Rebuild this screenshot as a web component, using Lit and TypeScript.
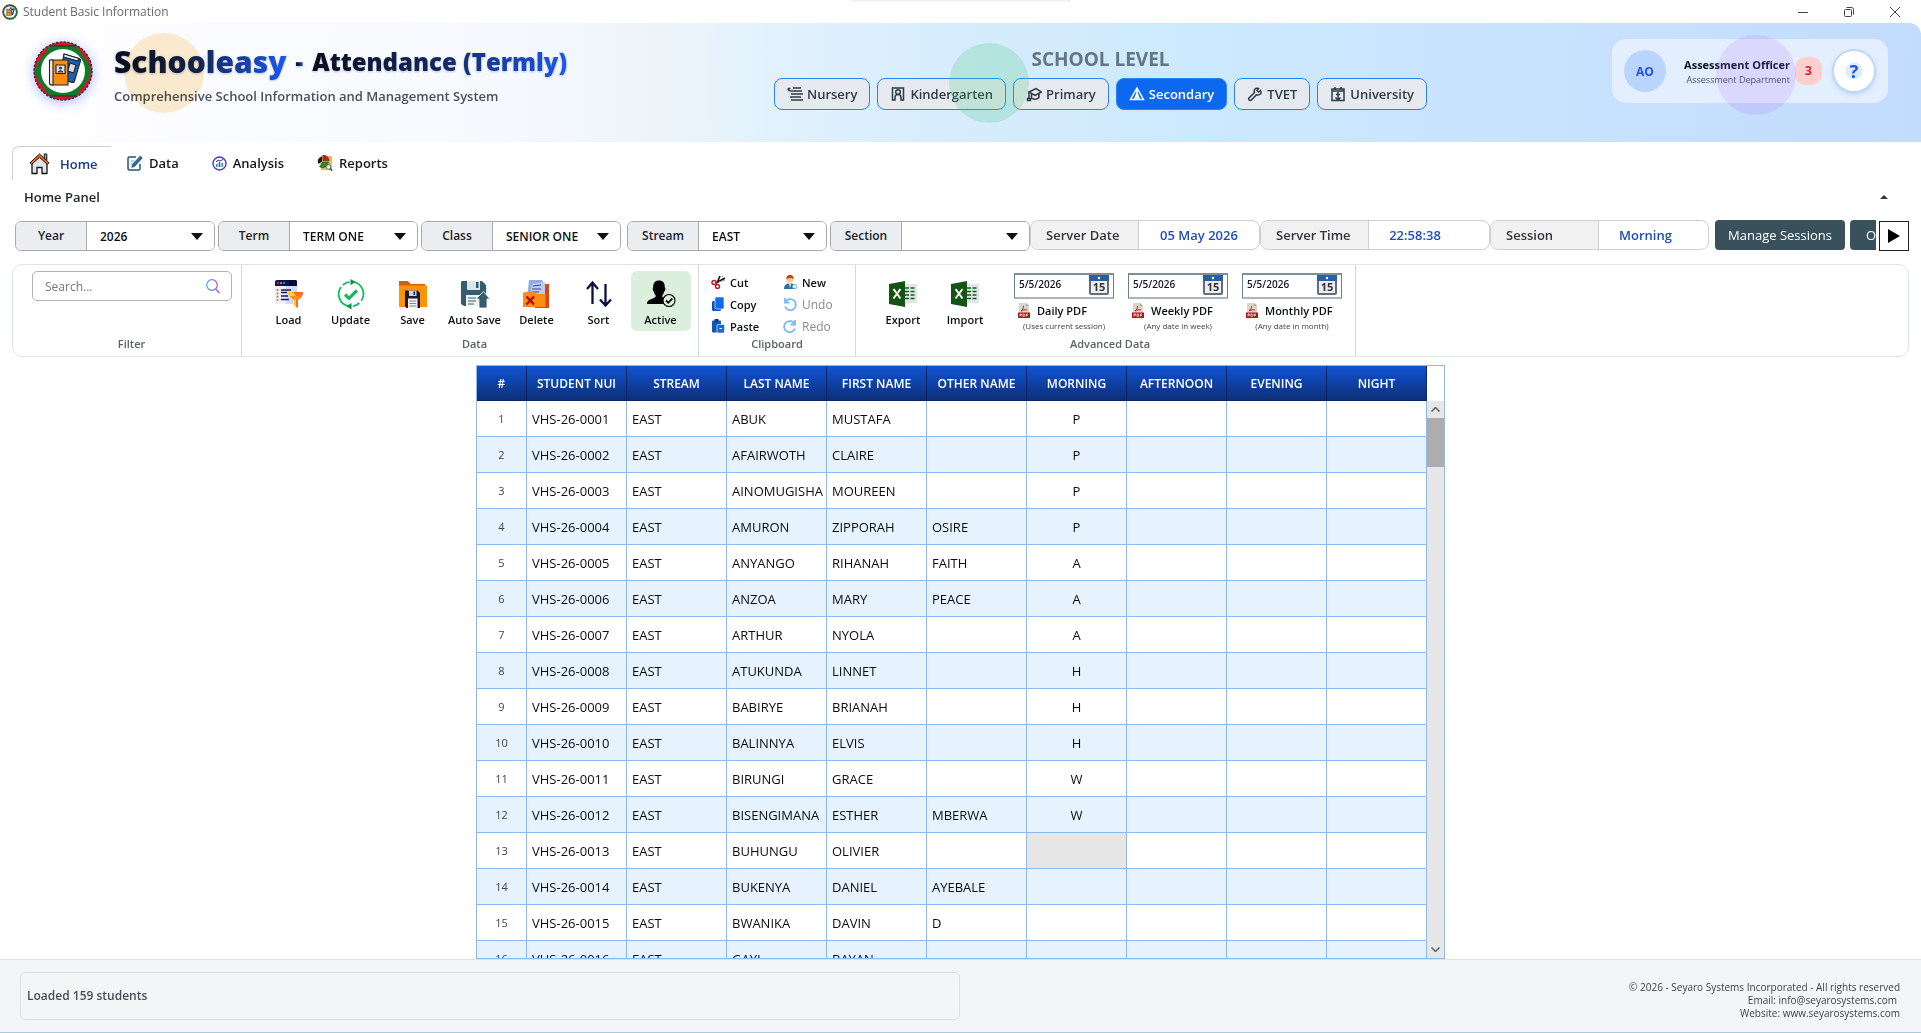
import { LitElement, html, css, svg, nothing } from "lit";
import { customElement } from "lit/decorators.js";
import { classMap } from "lit/directives/class-map.js";

const emblem = (size: number) => html`
  <svg class="emblem" width=${size} height=${size} viewBox="0 0 60 60" aria-hidden="true">
    <circle cx="30" cy="30" r="29" fill="#e3141c" stroke="#2b2a5e" stroke-width="1.6" stroke-dasharray="2.4 1.4" />
    <path d="M17 5h26L55 21l3 9-3 9-12 16H17L5 39l-3-9 3-9z" fill="#0a7d2c" />
    <path d="M17 5h26M17 55h26" stroke="#0b3d1c" stroke-width="1" />
    <circle cx="30" cy="30" r="22" fill="#fff" />
    <g stroke="#1b2330" stroke-width="1.1" stroke-linejoin="round">
      <path d="M31 13l15 4.5c1.400.4 1.800 1.300 1.400 2.600L41.500 40c-.4 1.400-1.200 1.800-2.600 1.400L26 37z" fill="#1f5fae" />
      <path d="M31 13l15 4.500-1 2.600L30.500 16z" fill="#e8eef5" />
      <path d="M37 22l6 2-2.400 8-6-2z" fill="#cfdcec" />
      <path d="M18 19h17v25H20c-1.800 0-3-.8-3-2.500V20z" fill="#f98c13" />
      <path d="M16.500 19h3.500v25h-1c-1.700 0-2.500-.8-2.500-2.300z" fill="#f4ead9" />
      <path d="M23 24h9v8.500h-9z" fill="#dfe3e8" />
    </g>
    <circle cx="27.500" cy="27" r="1.600" fill="#39424f" />
    <path d="M24.500 31.500c.4-3 5.600-3 6 0z" fill="#39424f" />
  </svg>
`;

const tabIcons: Record<string, unknown> = {
  Home: html`<svg width="21" height="22" viewBox="0 0 21 22" aria-hidden="true">
    <path d="M3 10v10.500h5v-6h5v6h5V10l-7.500-7z" fill="#dfe6ea" stroke="#111" stroke-width="1.300" stroke-linejoin="round" />
    <path d="M15.200 1h2.600v6.500l-2.600-2.400z" fill="#9aa4ab" stroke="#111" />
    <path d="M10.500 1L1 9.800l1.600 1.700 7.900-7.200 7.900 7.200L20 9.800z" fill="#ff6a13" stroke="#111" stroke-linejoin="round" />
  </svg>`,
  Data: html`<svg width="16" height="16" viewBox="0 0 16 16" fill="none" aria-hidden="true">
    <path d="M9 2H2.500C1.700 2 1 2.700 1 3.500v10c0 .8.7 1.500 1.500 1.500h9c.8 0 1.500-.7 1.500-1.500V9" stroke="#21557f" stroke-width="1.500" />
    <path d="M3.500 6h4M3.500 9h2" stroke="#8fa9bd" />
    <path d="M13.300 1l2 2-7.500 8.200-3 1.200.8-3.200z" fill="#2f6c9c" stroke="#163c5c" stroke-width=".6" />
  </svg>`,
  Analysis: html`<svg width="15" height="15" viewBox="0 0 15 15" aria-hidden="true">
    <circle cx="7.500" cy="7.500" r="6.500" fill="#fff" stroke="#4638e0" stroke-width="1.400" />
    <path d="M4 8h1.600v3H4z" fill="#12a6a0" /><path d="M6.700 6h1.600v5H6.700z" fill="#3848e8" /><path d="M9.400 7h1.600v4H9.400z" fill="#28b36b" />
    <path d="M4 6l2-2 2 1 3-1.500" fill="none" stroke="#23246b" stroke-width=".9" />
  </svg>`,
  Reports: html`<svg width="16" height="16" viewBox="0 0 16 16" aria-hidden="true">
    <path d="M4 1h11v14H4z" fill="#f5b83c" />
    <path d="M6 5.500V0a6 6 0 016 5.500z" fill="#e8121c" stroke="#222" stroke-width=".6" />
    <path d="M5 6.500V1.500A5 5 0 001.500 9z" fill="#1f1a17" />
    <path d="M5.500 7h6a6 6 0 01-9 4.800z" fill="#27901f" stroke="#222" stroke-width=".5" />
    <circle cx="11.500" cy="12" r="2.300" fill="#e6f6fa" stroke="#1c7f93" stroke-width=".9" />
    <path d="M13.200 13.600l2 2" stroke="#222" stroke-width="1.200" />
  </svg>`,
};

const levelIcons: Record<string, unknown> = {
  Nursery: svg`<path d="M1 2.500h2.500M1 2.500c0 2 2 2.500 4 2.500h10M6 2h8M4 8h12M3 11h11M4 14h12" />`,
  Kindergarten: svg`<path d="M2.500 2h11v12h-2.500v-2.500a3 3 0 00-6 0V14H2.500z" /><circle cx="8" cy="6" r="2.300" />`,
  Primary: svg`<path d="M3 6l7-3.500L15.500 6 9 9.500zM5.500 8v4c2 2 5.500 1.500 7.500-.5V7.500M3 6.500v6M1.500 12.500h3v2h-3z" />`,
  Secondary: svg`<path d="M8 2L14.500 13.500h-13zM8 2v11.500M5.500 13.500L8 7l2.500 6.500" />`,
  TVET: svg`<path d="M13.500 4.500L11.500 6 10 4.500l1.500-2c-3-1-5 1-4 4L2 12c-1 1.500.8 3.300 2.200 2.200L9.500 8.700c3.500 1 5.500-1.200 4-4.200z" />`,
  University: svg`<path d="M2 3h12v11.500H2zM2 5h12M5 1v3M11 1v3M8 6v8M6 8.500h4M5.500 11.500L8 14l2.500-2.500" />`,
};

const bigIcons: Record<string, unknown> = {
  Load: svg`
    <path d="M0 5h22v14l-3 5H1.500A1.500 1.500 0 010 22.500z" fill="#d5d6fb" /><path d="M0 5h11v19H1.500A1.500 1.500 0 010 22.500z" fill="#f0f1f4" />
    <path d="M0 6V2a2 2 0 012-2h18a2 2 0 012 2v4z" fill="#061650" /><path d="M14 0h6a2 2 0 012 2v4h-8z" fill="#030b31" />
    <circle cx="3" cy="3" r=".9" fill="#f43" /><circle cx="6" cy="3" r=".9" fill="#fa3" /><circle cx="9" cy="3" r=".9" fill="#5ae" />
    <path d="M2.500 9v12" stroke="#ff5a36" stroke-width="1.600" stroke-dasharray="2 1.400" />
    <path d="M6 10h10M6 12.500h6M6 16h7M6 19.500h8" stroke="#0b1d6b" stroke-width="1.400" />
    <path d="M13 12h15c0 4-2 6-5 7.500V28l-4-2.500v-6C15 18 13 16 13 12z" fill="#ffd21e" /><path d="M18 12h10c0 4-2 6-5 7.500V28l-2-1.200V16z" fill="#ff6a2b" /><path d="M15 16h11l-3 3.500h-5z" fill="#fb8d1b" />`,
  Update: svg`
    <g fill="none" stroke="#12bd60" stroke-width="1.800"><path d="M16.500 1.800a12.300 12.300 0 017.800 19M22.300 23a12.300 12.300 0 01-6.300 3.200M11.500 26.200A12.300 12.300 0 014 7M5.800 5A12.300 12.300 0 0112.500 1.800" /></g>
    <path d="M13.500-1l5 3-5 3.200zM14.500 23l-5 3.200 5 3.200z" fill="#0b8f49" />
    <path d="M8 14.500l4 3.800 8-7.800" fill="none" stroke="#14b95c" stroke-width="3.200" />`,
  Save: svg`
    <path d="M0 1h9l2.500 3H26v8H0z" fill="#d65f04" /><path d="M0 5.500h28V27H0z" fill="#ff9408" />
    <path d="M6 10.500h12.500L21 13v15H7.500L6 26.500z" fill="#191a38" /><path d="M10 10.500h7.500v5.500H10z" fill="#c9d2e6" /><path d="M14.500 11.500h1.600v3.500h-1.600z" fill="#191a38" />
    <path d="M9 18.500h9.500V28H9z" fill="#eef1f8" /><path d="M10.500 21h6.500M10.500 23.500h6.500M10.500 26h6.500" stroke="#7c87a4" />`,
  "Auto Save": svg`
    <path d="M1 1h20l4 4v21H3l-3-2V2z" fill="#365c70" /><path d="M6 1h13v9H6z" fill="#dbe6eb" /><path d="M15 2h2.500v6H15z" fill="#365c70" />
    <path d="M5 15h18v11H5z" fill="#eef3f5" /><path d="M7 18h8M7 21h8M7 24h6" stroke="#365c70" />
    <path d="M22.500 11.500L29 19h-3v9h-8v-9h-3z" fill="#365c70" stroke="#fff" stroke-width=".8" />`,
  Delete: svg`
    <path d="M12 4h14v24H12z" fill="#d9480f" /><path d="M6 0h13l2 3v15H4z" fill="#93aede" /><path d="M9 4l13-2v18H6z" fill="#bccdf0" /><path d="M10 6l8-1M9 9h9M8 12h8" stroke="#2d4a94" stroke-width="1.100" />
    <path d="M0 12.500L10 11l3 3h9.500V27H0z" fill="#fb8c1a" /><path d="M3.500 16.500l7.500 8M11 16.500l-7.500 8" stroke="#b80d0d" stroke-width="2.400" />`,
  Sort: svg`<path d="M7.500 24V3M2 9l5.500-6.500L13 9M20.500 4v21M15 19.500l5.500 6 5.500-6" fill="none" stroke="#0a1045" stroke-width="2.300" />`,
  Active: svg`
    <path d="M12 .5c4 0 6 2.500 5.800 7C19 8 18 11 17 12c-.5 2-1.500 3.500-2 4 1 2.500 4 2.800 5 4-1.500 1-1.500 2-1.600 4H0c0-6 7-4 9-8-.8-.8-1.500-2-2-4-1.200-1-1.700-4-.8-4.500C6 3 8 .5 12 .5z" fill="#000" />
    <circle cx="22" cy="20.500" r="6" fill="#dcefdc" stroke="#000" stroke-width="1.100" /><path d="M19 20.500l2.300 2.300 4-4.300" fill="none" stroke="#000" stroke-width="1.800" />`,
  Export: svg`
    <path d="M13 4h15v19H13z" fill="#e1e6e4" /><path d="M16 8h4M21.500 8h4M16 11.500h4M21.500 11.500h4M16 15h4M21.500 15h4M16 18.500h4M21.500 18.500h4" stroke="#14591c" stroke-width="1.500" />
    <path d="M0 4L16 1v26L0 24z" fill="#135314" /><path d="M4.500 9l7 9.500M11.500 9l-7 9.500" stroke="#fff" stroke-width="2" />`,
};
bigIcons.Import = bigIcons.Export;

const smallIcons: Record<string, unknown> = {
  Cut: svg`<g fill="none"><path d="M9 1L6 8M14 3L5 8" stroke="#111" stroke-width="1.600" /><path d="M11 1l1 1M14 5l-6 2" stroke="#999" /><circle cx="3" cy="7.500" r="2" stroke="#c9141b" stroke-width="1.500" /><circle cx="6.500" cy="11.500" r="2" stroke="#c9141b" stroke-width="1.500" /></g>`,
  Copy: svg`<rect x="1" y="4" width="9" height="10" rx="1.300" fill="#1550b8" /><rect x="4" y="0" width="9" height="12" rx="1.300" fill="#1268ee" stroke="#fff" stroke-width=".6" />`,
  Paste: svg`<rect x="1" y="1.500" width="9" height="12" rx="1" fill="#1257b5" /><rect x="3.500" y="0" width="4" height="3" fill="#0a3c8a" /><rect x="6" y="5.500" width="7.500" height="8.500" rx="1" fill="#1a68d8" stroke="#fff" stroke-width=".6" /><path d="M8.500 9.500h2.500" stroke="#fff" />`,
  New: svg`<circle cx="7" cy="4.500" r="3.300" fill="#f9c79a" /><path d="M3.500 4.500C3 1 5 0 7 0s4 1 3.500 4.500C9.500 2.500 5 2.500 3.500 4.500z" fill="#c8420d" /><path d="M1 14c0-4 2-5.500 6-5.500s6 1.500 6 5.500z" fill="#2a6f9a" /><path d="M6 8.500h2L7 13z" fill="#fff" /><circle cx="11.500" cy="11.500" r="2.200" fill="#dfeffa" stroke="#5f93b4" stroke-width=".7" />`,
  Undo: svg`<path d="M2 1v4.500h4.500M2.200 5.300A5.600 5.600 0 112 9.500" fill="none" stroke="#7cb8f4" stroke-width="1.800" />`,
  Redo: svg`<path d="M12 1v4.500H7.500M11.800 5.300A5.600 5.600 0 1012 9.500" fill="none" stroke="#7cb8f4" stroke-width="1.800" />`,
};

const pdfIcon = html`<svg width="12" height="15" viewBox="0 0 12 15" aria-hidden="true">
  <path d="M1 0h7l3 3v10H1z" fill="#d9d5c9" /><path d="M8 0l3 3H8z" fill="#a8a294" />
  <path d="M3 8c2-1.500 2.500-3 2.500-5M3 8c2-1.200 4-1.500 6-1" fill="none" stroke="#c2191f" />
  <path d="M0 9.500h12V15H0z" fill="#b3151b" /><path d="M2 13.500v-2.500h1.500v1.200H2M5 11v2.500h1c1.300 0 1.300-2.500 0-2.500zM8.500 13.500V11H10M8.500 12.200H10" fill="none" stroke="#fff" stroke-width=".7" />
</svg>`;

const LEVELS = ["Nursery", "Kindergarten", "Primary", "Secondary", "TVET", "University"];
const FILTERS = [
  { id: "year", label: "Year", value: "2026" },
  { id: "term", label: "Term", value: "TERM ONE" },
  { id: "class", label: "Class", value: "SENIOR ONE" },
  { id: "stream", label: "Stream", value: "EAST" },
  { id: "section", label: "Section", value: "" },
];
const SERVER = [
  { label: "Server Date", value: "05 May 2026" },
  { label: "Server Time", value: "22:58:38" },
  { label: "Session", value: "Morning" },
];
const REPORTS = [
  { name: "Daily PDF", note: "(Uses current session)" },
  { name: "Weekly PDF", note: "(Any date in week)" },
  { name: "Monthly PDF", note: "(Any date in month)" },
];
const COLUMNS = ["#", "STUDENT NUI", "STREAM", "LAST NAME", "FIRST NAME", "OTHER NAME", "MORNING", "AFTERNOON", "EVENING", "NIGHT"];
const STUDENTS: [string, string, string, string][] = [
  ["ABUK", "MUSTAFA", "", "P"],
  ["AFAIRWOTH", "CLAIRE", "", "P"],
  ["AINOMUGISHA", "MOUREEN", "", "P"],
  ["AMURON", "ZIPPORAH", "OSIRE", "P"],
  ["ANYANGO", "RIHANAH", "FAITH", "A"],
  ["ANZOA", "MARY", "PEACE", "A"],
  ["ARTHUR", "NYOLA", "", "A"],
  ["ATUKUNDA", "LINNET", "", "H"],
  ["BABIRYE", "BRIANAH", "", "H"],
  ["BALINNYA", "ELVIS", "", "H"],
  ["BIRUNGI", "GRACE", "", "W"],
  ["BISENGIMANA", "ESTHER", "MBERWA", "W"],
  ["BUHUNGU", "OLIVIER", "", ""],
  ["BUKENYA", "DANIEL", "AYEBALE", ""],
  ["BWANIKA", "DAVIN", "D", ""],
  ["GAYI", "BAYAN", "", ""],
];
const SELECTED_ROW = 12;

const base = css`
  * { box-sizing: border-box; }
  button, input, select { font-family: inherit; margin: 0; padding: 0; border: 0; background: none; color: inherit; }
  svg { display: block; flex: none; }
`;

@customElement("app-header")
class AppHeader extends LitElement {
  static styles = [base, css`
    :host { display: block; }
    .titlebar { position: relative; display: flex; align-items: center; height: 23px; padding: 0 20px 0 2px; gap: 5px; color: #6b6b6b; font-size: 12px; line-height: 16px; background: #fff; }
    .notch { position: absolute; top: 0; left: 851px; width: 220px; height: 3px; background: linear-gradient(#eee, #fff); }
    .window { display: flex; gap: 34px; margin-left: auto; }
    .window button { width: 12px; height: 12px; }
    .banner {
      position: relative; display: grid; grid-template-columns: 1fr auto 461px; height: 119px; padding: 0 33px;
      border-top-right-radius: 12px;
      background: linear-gradient(92deg, #fff 0%, #fafbff 12%, #f6f9fd 26%, #edf4f9 34%, #e2f2fc 40%, #d8edfc 48%, #cde9fd 62%, #cbe5fe 72%, #c3dbfd 100%);
    }
    .brand { display: flex; gap: 21px; padding-top: 18px; }
    .emblem { border-radius: 50%; filter: drop-shadow(0 2px 6px #a9b9f6); }
    .titlebar .emblem { filter: none; }
    .names { display: flex; flex-direction: column; padding-top: 1px; }
    h1 { display: flex; align-items: center; gap: 9px; margin: 0; font-size: 30px; line-height: 40px; font-weight: 800; filter: drop-shadow(0 1px 1px #b9c3da); white-space: nowrap; }
    .ink { background: linear-gradient(90deg, #0a0e1a, #14275e 50%, #1d57f2); background-clip: text; -webkit-background-clip: text; color: transparent; }
    .page { font-size: 24px; }
    .tagline { margin: 4px 0 0; font-size: 13px; line-height: 20px; font-weight: 600; color: #4a505b; white-space: nowrap; }
    .levels { display: flex; flex-direction: column; align-items: center; padding-top: 24px; }
    h2 { margin: 0; font-size: 19px; line-height: 24px; font-weight: 700; color: #637682; }
    .options { display: flex; gap: 7px; margin-top: 7px; }
    .option { display: flex; align-items: center; justify-content: center; gap: 4px; height: 32px; padding: 0 12px; border: 1px solid #2b83f2; border-radius: 8px; background: #e6e9ef; color: #2f3b46; font-size: 13px; font-weight: 600; }
    .option svg { fill: none; stroke: currentColor; stroke-width: 1.5; }
    .option.on { background: #0c68ee; color: #fff; }
    .side { display: flex; justify-content: flex-end; align-items: flex-start; padding-top: 16px; }
    .user { display: flex; align-items: center; width: 276px; height: 64px; padding: 0 14px 0 12px; border-radius: 14px; background: #e3effe; }
    .avatar { display: flex; align-items: center; justify-content: center; width: 42px; height: 42px; border-radius: 50%; background: #b9d5fe; color: #1d52f0; font-size: 12px; font-weight: 700; }
    .who { display: flex; flex-direction: column; flex: 1; align-items: flex-end; padding-right: 5px; white-space: nowrap; }
    .who strong { font-size: 11px; line-height: 16px; color: #0b1020; }
    .who span { font-size: 9px; line-height: 13px; color: #4b4f5e; }
    .count { width: 27px; height: 28px; border-radius: 10px; background: #fdd0cf; color: #e81c24; font-size: 12px; font-weight: 700; line-height: 28px; text-align: center; }
    .help { display: flex; align-items: center; justify-content: center; width: 40px; height: 40px; margin-left: 12px; border-radius: 50%; background: radial-gradient(#deeafe 0 8px, #fff 9px); box-shadow: 0 0 0 2px #bdd6fd, 0 2px 6px #a9c3f8; color: #1d52f0; font-size: 18px; font-weight: 700; }
    .blob { position: absolute; width: 80px; height: 80px; border-radius: 50%; pointer-events: none; }
    .amber { left: 124px; top: 10px; background: rgba(245, 158, 11, 0.2); mix-blend-mode: multiply; }
    .green { left: calc(50% - 12px); top: 20px; background: rgba(52, 199, 110, 0.2); }
    .violet { right: 125px; top: 12px; background: rgba(168, 85, 247, 0.15); }
  `];

  render() {
    return html`
      <div class="titlebar">
        ${emblem(16)}<span>Student Basic Information</span>
        <div class="notch"></div>
        <div class="window">
          <button aria-label="Minimize"><svg width="12" height="12" viewBox="0 0 12 12" stroke="#444"><path d="M1 6.500h10" /></svg></button>
          <button aria-label="Restore"><svg width="12" height="12" viewBox="0 0 12 12" fill="none" stroke="#444"><rect x="1.500" y="3.500" width="7" height="7" rx="1" /><path d="M3.500 1.500h5a2 2 0 012 2v5" /></svg></button>
          <button aria-label="Close"><svg width="12" height="12" viewBox="0 0 12 12" stroke="#444"><path d="M1 1l10 10M11 1L1 11" /></svg></button>
        </div>
      </div>
      <header class="banner">
        <div class="brand">
          ${emblem(60)}
          <div class="names">
            <h1><span class="ink">Schooleasy</span><span class="ink page">-</span><span class="ink page">Attendance (Termly)</span></h1>
            <p class="tagline">Comprehensive School Information and Management System</p>
          </div>
        </div>
        <nav class="levels">
          <h2>SCHOOL LEVEL</h2>
          <div class="options">
            ${LEVELS.map((name) => html`
              <button class=${classMap({ option: true, on: name === "Secondary" })}>
                <svg width="16" height="16" viewBox="0 0 16 16" aria-hidden="true">${levelIcons[name]}</svg>${name}
              </button>`)}
          </div>
        </nav>
        <div class="side">
          <div class="user">
            <div class="avatar">AO</div>
            <div class="who"><strong>Assessment Officer</strong><span>Assessment Department</span></div>
            <div class="count">3</div>
            <button class="help" aria-label="Help">?</button>
          </div>
        </div>
        <div class="blob amber"></div><div class="blob green"></div><div class="blob violet"></div>
      </header>`;
  }
}

@customElement("app-toolbar")
class AppToolbar extends LitElement {
  static styles = [base, css`
    :host { display: block; }
    .tabs { display: flex; padding: 4px 12px 0; }
    .tab { display: flex; align-items: center; gap: 6px; height: 34px; margin-right: 33px; font-size: 13px; font-weight: 600; color: #14181f; }
    .tab.on { gap: 10px; width: 99px; margin-right: 16px; padding-left: 16px; border-top: 1px solid #cfcfcf; border-left: 1px solid #cfcfcf; border-top-left-radius: 7px; color: #143c8c; }
    .panel { display: flex; align-items: center; justify-content: space-between; height: 34px; padding: 0 33px 0 24px; font-size: 13px; font-weight: 600; color: #23272e; }
    .filters { display: flex; align-items: center; height: 38px; padding: 0 12px 0 15px; margin-top: 3px; }
    .field { display: flex; flex: 0 0 200px; height: 30px; margin-right: 3px; border: 1px solid #a9a9a9; border-radius: 6px; overflow: hidden; position: relative; }
    .field.wide { margin-right: 6px; }
    .field.last { margin-right: 0; }
    .field label { width: 71px; background: #ebedf1; border-right: 1px solid #a9a9a9; font-size: 12px; font-weight: 600; line-height: 28px; text-align: center; color: #20242b; }
    .field select { flex: 1; min-width: 0; padding: 0 13px; appearance: none; background: #fff; font-size: 12px; font-weight: 600; color: #0c1017; }
    .field svg { position: absolute; right: 11px; top: 11px; pointer-events: none; }
    .server { display: flex; flex: 0 0 230px; height: 30px; margin: 0 0 2px; border: 1px solid #cfcfcf; border-radius: 8px; overflow: hidden; font-size: 13px; font-weight: 600; line-height: 28px; }
    .server.short { flex-basis: 219px; }
    .server dt { width: 108px; padding-left: 15px; background: #f1f1f1; border-right: 1px solid #cfcfcf; color: #33373d; white-space: nowrap; }
    .server dd { flex: 1; margin: 0; text-align: center; color: #1e4fb8; white-space: nowrap; }
    .server.clock dd { padding-right: 28px; }
    .server.short dd { padding-right: 16px; }
    .row-end { display: flex; flex: 1; min-width: 0; gap: 5px; margin: 0 3px 2px 6px; overflow: hidden; }
    .solid { flex: 0 0 130px; height: 30px; border-radius: 4px; background: #3a515c; color: #fff; font-size: 13px; white-space: nowrap; }
    .solid.cut { padding-left: 16px; text-align: left; }
    .scroll { display: flex; flex: none; align-items: center; justify-content: center; width: 30px; height: 30px; border: 1px solid #222; background: #fff; }
    .ribbon { display: flex; height: 93px; margin: 9px 12px 0; border: 1px solid #dfe3ea; border-radius: 10px; }
    .group { display: flex; flex-direction: column; justify-content: space-between; padding: 6px 0 5px 9px; border-right: 1px solid #d3d9e4; }
    .body { display: flex; justify-content: center; gap: 2px; }
    h3 { margin: 0; font-size: 11px; line-height: 14px; font-weight: 600; color: #5c6068; text-align: center; }
    .find { width: 229px; }
    .data { width: 457px; }
    .edit { width: 157px; padding-left: 0; }
    .advanced { width: 500px; }
    .search { display: flex; align-items: center; width: 200px; height: 30px; margin-left: 10px; padding: 0 11px 0 12px; border: 1px solid #b3b3b3; border-radius: 5px; }
    .search input { flex: 1; min-width: 0; font-size: 12px; outline: 0; }
    .search input::placeholder { color: #777; opacity: 1; }
    .big { display: flex; flex-direction: column; align-items: center; gap: 3px; width: 60px; height: 60px; padding-top: 9px; border-radius: 6px; font-size: 11px; line-height: 18px; font-weight: 600; color: #0c0f14; white-space: nowrap; }
    .big.on { background: #dcefdc; }
    .big svg { overflow: visible; }
    .clips { display: grid; grid-template-columns: 72px auto; grid-auto-rows: 22px; padding-left: 12px; }
    .clip { display: flex; align-items: center; gap: 5px; font-size: 11px; font-weight: 600; color: #0c0f14; }
    .clip:disabled { color: #8b8b8b; font-weight: 400; font-size: 12px; }
    .advanced .body { justify-content: flex-start; padding-left: 8px; }
    .reports { display: flex; gap: 14px; margin-left: 17px; padding-top: 2px; }
    .report { display: flex; flex-direction: column; width: 100px; }
    .date { display: flex; justify-content: space-between; height: 26px; padding: 0 5px 0 4px; border: 1px solid #6f7d8e; border-top: 2px solid #7f8c9c; border-bottom: 2px solid #aab5c2; }
    .date input { width: 70px; height: 18px; font-size: 10px; font-weight: 600; color: #14181f; }
    .pdf { display: flex; align-items: center; gap: 7px; height: 20px; padding-left: 4px; margin-top: 1px; font-size: 11px; font-weight: 600; white-space: nowrap; color: #0c0f14; }
    .note { font-size: 8px; line-height: 12px; text-align: center; color: #3c4046; }
  `];

  private big = (name: string) => html`
    <button class=${classMap({ big: true, on: name === "Active" })}>
      <svg width="28" height="28" viewBox="0 0 28 28" aria-hidden="true">${bigIcons[name]}</svg>${name}
    </button>`;

  render() {
    return html`
      <nav class="tabs">
        ${["Home", "Data", "Analysis", "Reports"].map((name) => html`
          <button class=${classMap({ tab: true, on: name === "Home" })}>${tabIcons[name]}${name}</button>`)}
      </nav>
      <div class="panel">
        <span>Home Panel</span>
        <button aria-label="Collapse panel"><svg width="8" height="4" viewBox="0 0 8 4"><path d="M4 0l4 4H0z" fill="#333" /></svg></button>
      </div>
      <div class="filters">
        ${FILTERS.map((f) => html`
          <div class=${classMap({ field: true, wide: f.id === "class", last: f.id === "section" })}>
            <label for=${f.id}>${f.label}</label>
            <select id=${f.id}><option>${f.value}</option></select>
            <svg width="12" height="7" viewBox="0 0 12 7" aria-hidden="true"><path d="M0 0h12L6 7z" fill="#0c1017" /></svg>
          </div>`)}
        ${SERVER.map((s) => html`
          <dl class=${classMap({ server: true, short: s.label === "Session", clock: s.label === "Server Time" })}><dt>${s.label}</dt><dd>${s.value}</dd></dl>`)}
        <div class="row-end">
          <button class="solid">Manage Sessions</button>
          <button class="solid cut">O</button>
        </div>
        <button class="scroll" aria-label="Scroll right"><svg width="12" height="14" viewBox="0 0 12 14"><path d="M0 0l12 7-12 7z" /></svg></button>
      </div>
      <div class="ribbon">
        <section class="group find">
          <div class="search">
            <input type="text" placeholder="Search..." aria-label="Search" />
            <svg width="14" height="15" viewBox="0 0 14 15" fill="none" stroke="url(#lens)" aria-hidden="true">
              <defs><linearGradient id="lens"><stop stop-color="#4aa8f7" /><stop offset="1" stop-color="#b04df0" /></linearGradient></defs>
              <circle cx="6" cy="6" r="5.300" stroke-width="1.200" /><path d="M9.800 10l3.500 4" stroke-width="1.600" />
            </svg>
          </div>
          <h3>Filter</h3>
        </section>
        <section class="group data">
          <div class="body">${["Load", "Update", "Save", "Auto Save", "Delete", "Sort", "Active"].map(this.big)}</div>
          <h3>Data</h3>
        </section>
        <section class="group edit">
          <div class="clips">
            ${["Cut", "New", "Copy", "Undo", "Paste", "Redo"].map((name) => html`
              <button class="clip" ?disabled=${name === "Undo" || name === "Redo"}>
                <svg width="14" height="14" viewBox="0 0 14 14" aria-hidden="true">${smallIcons[name]}</svg>${name}
              </button>`)}
          </div>
          <h3>Clipboard</h3>
        </section>
        <section class="group advanced">
          <div class="body">
            ${["Export", "Import"].map(this.big)}
            <div class="reports">
              ${REPORTS.map((r) => html`
                <div class="report">
                  <div class="date">
                    <input type="text" value="5/5/2026" aria-label=${`${r.name} date`} />
                    <svg width="20" height="20" viewBox="0 0 20 20" aria-hidden="true">
                      <rect x="1" y="1" width="18" height="18" rx="1" fill="#eceef1" stroke="#656d78" stroke-width="2" />
                      <path d="M0 0h20v6H0z" fill="#2c5f9e" /><circle cx="10" cy="3" r="1.200" fill="#fff" />
                      <text x="10" y="16" text-anchor="middle" font-size="11" font-weight="700" fill="#333">15</text>
                    </svg>
                  </div>
                  <button class="pdf">${pdfIcon}${r.name}</button>
                  <span class="note">${r.note}</span>
                </div>`)}
            </div>
          </div>
          <h3>Advanced Data</h3>
        </section>
      </div>`;
  }
}

@customElement("attendance-grid")
class AttendanceGrid extends LitElement {
  static styles = [base, css`
    :host { display: flex; justify-content: center; min-height: 0; }
    .frame { display: flex; border: 1px solid #8fb7f0; overflow: hidden; }
    table { align-self: flex-start; table-layout: fixed; width: 950px; border-collapse: separate; border-spacing: 0; }
    .index { width: 50px; }
    th { height: 35px; padding: 0; background: linear-gradient(#1153d3, #0d2f78); border-right: 1px solid #0a2560; border-bottom: 1px solid #0a2560; color: #fff; font-size: 12px; font-weight: 600; white-space: nowrap; }
    td { height: 36px; padding: 0 5px; border-right: 1px solid #8fb7f0; border-bottom: 1px solid #8fb7f0; font-size: 13px; color: #0a0c10; white-space: nowrap; }
    tr:nth-child(even) td { background: #e6f2fe; }
    .num { padding: 0; font-size: 11px; text-align: center; color: #444; }
    .mark { text-align: center; }
    tr .picked { background: #e6e6e6; }
    .bar { display: flex; flex-direction: column; width: 17px; padding-top: 35px; }
    .track { display: flex; flex: 1; flex-direction: column; align-items: center; justify-content: space-between; background: #e7e7e7; }
    .track svg { margin: 6px 0; }
    .top { display: flex; flex-direction: column; align-items: center; width: 100%; }
    .thumb { width: 100%; height: 49px; background: #adadad; }
  `];

  render() {
    const chevron = (d: string) => html`<svg width="9" height="5" viewBox="0 0 9 5" fill="none" stroke="#606060" stroke-width="1.500"><path d=${d} /></svg>`;
    return html`
      <div class="frame">
        <table>
          <colgroup><col class="index" />${COLUMNS.slice(1).map(() => html`<col />`)}</colgroup>
          <thead><tr>${COLUMNS.map((c) => html`<th scope="col">${c}</th>`)}</tr></thead>
          <tbody>
            ${STUDENTS.map(([last, first, other, mark], i) => html`
              <tr>
                <td class="num">${i + 1}</td>
                <td>VHS-26-${String(i + 1).padStart(4, "0")}</td>
                <td>EAST</td><td>${last}</td><td>${first}</td><td>${other || nothing}</td>
                <td class=${classMap({ mark: true, picked: i === SELECTED_ROW })}>${mark}</td>
                <td></td><td></td><td></td>
              </tr>`)}
          </tbody>
        </table>
        <div class="bar">
          <div class="track">
            <div class="top">${chevron("M.5 4.500l4-4 4 4")}<div class="thumb"></div></div>
            ${chevron("M.5.5l4 4 4-4")}
          </div>
        </div>
      </div>`;
  }
}

@customElement("app-root")
class AppRoot extends LitElement {
  static styles = [base, css`
    :host { display: flex; flex-direction: column; height: 100vh; overflow: hidden; background: #fff; color: #14181f; font-family: "Open Sans", "Noto Sans", sans-serif; }
    app-header, app-toolbar { flex: none; }
    attendance-grid { flex: 1; margin: 8px 0 0; }
    footer { display: flex; flex: none; justify-content: space-between; height: 74px; padding: 12px 21px 12px 20px; border-top: 1px solid #dfe1e4; border-bottom: 1px solid #a9c9dc; background: #f3f5f7; }
    .status { flex: 0 1 940px; padding-left: 6px; border: 1px solid #dcdfe3; border-radius: 5px; font-size: 12px; font-weight: 600; line-height: 46px; color: #474d57; }
    address { padding-top: 9px; font-style: normal; font-size: 10px; line-height: 13px; text-align: right; color: #3b3f46; white-space: nowrap; }
    .mail { padding-right: 3px; }
  `];

  render() {
    return html`
      <app-header></app-header>
      <app-toolbar></app-toolbar>
      <attendance-grid></attendance-grid>
      <footer>
        <div class="status">Loaded 159 students</div>
        <address>
          <div>© 2026 - Seyaro Systems Incorporated - All rights reserved</div>
          <div class="mail">Email: info@seyarosystems.com</div>
          <div>Website: www.seyarosystems.com</div>
        </address>
      </footer>`;
  }
}
